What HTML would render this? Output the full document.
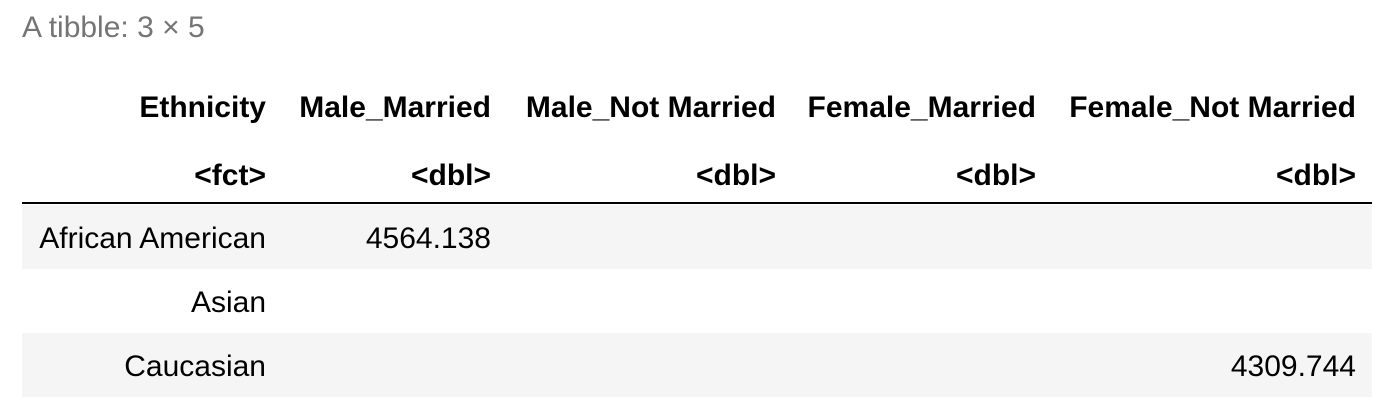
<!DOCTYPE html>
<html><head><style>
body{margin:0;width:1390px;height:406px;background:#fff;font-family:"Liberation Sans",Arial,sans-serif;font-size:30px;color:#000;position:relative;overflow:hidden}
.cap{position:absolute;left:22px;top:11px;color:#757575;line-height:34px;font-size:30px}
.row{position:absolute;left:22px;width:1350px;height:64px}
.c{position:absolute;text-align:right;line-height:64px;top:2px;white-space:nowrap}
.h .c{font-weight:bold}
.g{background:#f5f5f5}
.line{position:absolute;left:22px;width:1350px;top:202px;height:2px;background:#000}
</style></head><body>
<div class="cap">A tibble: 3 × 5</div>
<div class="row h" style="top:74px">
<div class="c" style="right:1106px">Ethnicity</div>
<div class="c" style="right:881px">Male_Married</div>
<div class="c" style="right:596px">Male_Not Married</div>
<div class="c" style="right:336px">Female_Married</div>
<div class="c" style="right:16px">Female_Not Married</div>
</div>
<div class="row h" style="top:142px">
<div class="c" style="right:1106px">&lt;fct&gt;</div>
<div class="c" style="right:881px">&lt;dbl&gt;</div>
<div class="c" style="right:596px">&lt;dbl&gt;</div>
<div class="c" style="right:336px">&lt;dbl&gt;</div>
<div class="c" style="right:16px">&lt;dbl&gt;</div>
</div>
<div class="line"></div>
<div class="row g" style="top:205px">
<div class="c" style="right:1106px">African American</div>
<div class="c" style="right:881px">4564.138</div>
</div>
<div class="row" style="top:269px">
<div class="c" style="right:1106px">Asian</div>
</div>
<div class="row g" style="top:333px">
<div class="c" style="right:1106px">Caucasian</div>
<div class="c" style="right:16px">4309.744</div>
</div>
</body></html>
